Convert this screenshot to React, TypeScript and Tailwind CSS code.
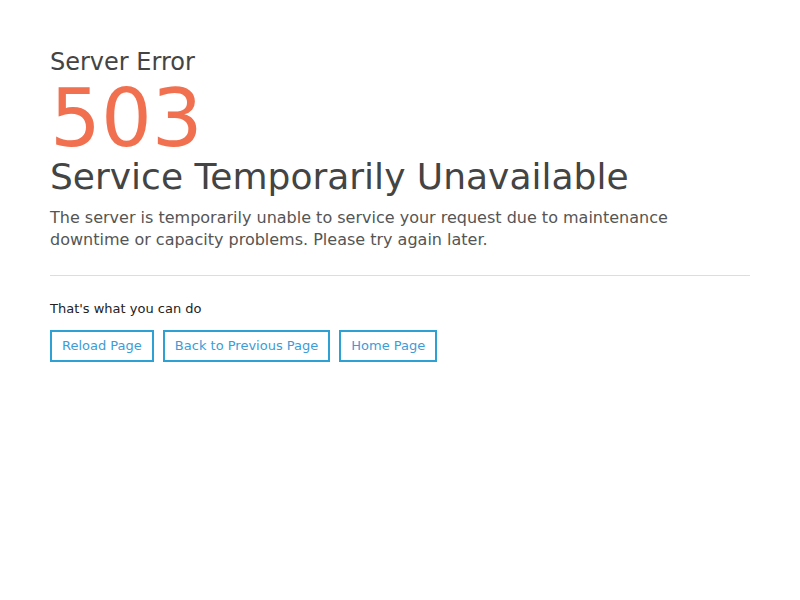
export default function App() {
  return (
    <div className="min-h-screen bg-white font-['DejaVu_Sans',sans-serif]">
      <div className="mx-[50px] pt-[50px]">
        <div className="text-[24px] leading-[24px] text-[#444444]">Server Error</div>
        <div className="mt-[7px] text-[80px] leading-[76px] text-[#f0704f]">503</div>
        <h1 className="text-[36px] leading-[40px] text-[#444444]">Service Temporarily Unavailable</h1>
        <p className="mt-[10px] text-[16px] leading-[22px] text-[#555555]">
          The server is temporarily unable to service your request due to maintenance downtime or
          capacity problems. Please try again later.
        </p>
        <hr className="mt-[24px] border-0 border-t border-[#dddddd]" />
        <div className="mt-[24px] text-[13px] leading-[18px] text-[#222222]">That's what you can do</div>
        <div className="mt-[12px] flex gap-[9px]">
          <button className="h-[32px] border-2 border-[#2ea1d4] px-[10px] text-[13px] text-[#3d9cd6]">
            Reload Page
          </button>
          <button className="h-[32px] border-2 border-[#2ea1d4] px-[10px] text-[13px] text-[#3d9cd6]">
            Back to Previous Page
          </button>
          <button className="h-[32px] border-2 border-[#2ea1d4] px-[10px] text-[13px] text-[#3d9cd6]">
            Home Page
          </button>
        </div>
      </div>
    </div>
  );
}
